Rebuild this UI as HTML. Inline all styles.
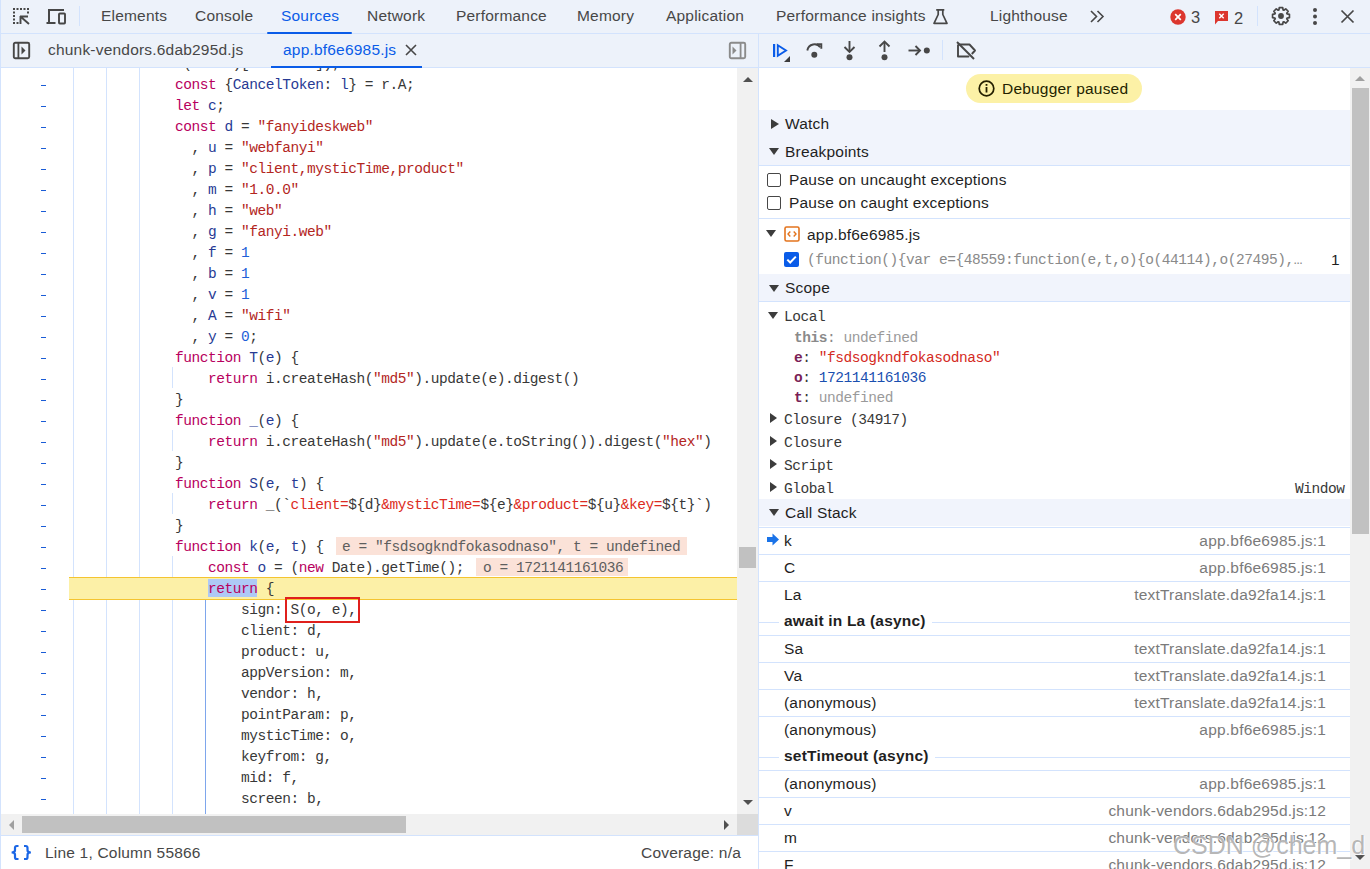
<!DOCTYPE html>
<html><head><meta charset="utf-8"><style>
*{margin:0;padding:0;box-sizing:border-box}
html,body{width:1370px;height:869px;overflow:hidden;background:#fff}
body{position:relative;font-family:"Liberation Sans",sans-serif;color:#1f1f1f}
.a{position:absolute}
.t{position:absolute;white-space:pre;line-height:1;font-size:15.5px;letter-spacing:0.2px}
.bar{position:absolute;background:#edf2fa}
.hl{position:absolute;background:#d3e3fd}
.m{font-family:"Liberation Mono",monospace}
/* code */
.ln{position:absolute;white-space:pre;font-family:"Liberation Mono",monospace;font-size:14.5px;letter-spacing:-0.45px;line-height:21px;height:21px;padding-top:2px;color:#383838}
.dash{position:absolute;left:41px;width:5px;height:1px;margin-top:12px;background:#1a5cd6}
.gd{position:absolute;width:1px;background:#d3e3fd}
.gd.act{background:#7ea6ec}
.kw{color:#b8005e}
.df{color:#273a94}
.st{color:#b3261e}
.nu{color:#1d5fd8}
.tp{color:#dc2b22}
.pl{color:#383838}
.sel{color:#b8005e}
.sc{position:absolute;background:#f1f1f1}
.th{position:absolute;background:#c1c1c1}
.sec{position:absolute;left:759px;width:591px;height:27px;background:#f1f4fc}
.bb{position:absolute;left:759px;width:591px;height:1px;background:#d3e3fd}
.cs{position:absolute;left:759px;width:591px;height:1px;background:#d3e3fd}
.tri{position:absolute;width:0;height:0}
.tr{border-top:5px solid transparent;border-bottom:5px solid transparent;border-left:8px solid #3c3c3c}
.td{border-left:5px solid transparent;border-right:5px solid transparent;border-top:8px solid #3c3c3c}
.fn{color:#6f6f6f}

</style></head><body>
<!-- ===== top toolbar ===== -->
<div class="bar" style="left:0;top:0;width:1370px;height:33px"></div>
<div class="hl" style="left:0;top:33px;width:1370px;height:1px"></div>
<div class="bar" style="left:0;top:34px;width:1370px;height:33px"></div>
<div class="hl" style="left:0;top:67px;width:1370px;height:1px"></div>
<div class="hl" style="left:0;top:0;width:1px;height:869px"></div>
<!-- inspect icon -->
<svg class="a" style="left:12px;top:7px" width="20" height="20" viewBox="0 0 20 20">
 <g fill="#474747"><rect x="1" y="1" width="2" height="2"/><rect x="4.5" y="1" width="2" height="2"/><rect x="8" y="1" width="2" height="2"/><rect x="11.5" y="1" width="2" height="2"/><rect x="15" y="1" width="2" height="2"/>
 <rect x="1" y="4.5" width="2" height="2"/><rect x="1" y="8" width="2" height="2"/><rect x="1" y="11.5" width="2" height="2"/><rect x="1" y="15" width="2" height="2"/><rect x="4.5" y="15" width="2" height="2"/>
 <rect x="15" y="4.5" width="2" height="2"/></g>
 <path d="M8.5 9 L8.5 17 M8 9.5 L16 9.5 M9 10 L17 17" stroke="#474747" stroke-width="1.9" fill="none"/>
</svg>
<!-- device icon -->
<svg class="a" style="left:45px;top:8px" width="24" height="18" viewBox="0 0 24 18">
 <path d="M4 15.5 L4 2 L19 2" stroke="#474747" stroke-width="2" fill="none"/>
 <rect x="1.5" y="14" width="9" height="2" fill="#474747"/>
 <rect x="14" y="5.5" width="6" height="10" rx="0.8" stroke="#474747" stroke-width="1.9" fill="none"/>
</svg>
<div class="hl" style="left:79px;top:6px;width:1px;height:20px"></div>
<div class="t" style="left:101px;top:8px;color:#474747">Elements</div>
<div class="t" style="left:195px;top:8px;color:#474747">Console</div>
<div class="t" style="left:281px;top:8px;color:#0a5ce8">Sources</div>
<div class="a" style="left:267px;top:32px;width:85px;height:2px;background:#0a5ce8;border-radius:1px"></div>
<div class="t" style="left:367px;top:8px;color:#474747">Network</div>
<div class="t" style="left:456px;top:8px;color:#474747">Performance</div>
<div class="t" style="left:577px;top:8px;color:#474747">Memory</div>
<div class="t" style="left:666px;top:8px;color:#474747">Application</div>
<div class="t" style="left:776px;top:8px;color:#474747">Performance insights</div>
<!-- flask -->
<svg class="a" style="left:932px;top:8px" width="17" height="17" viewBox="0 0 17 17">
 <path d="M4.2 1.8 H12.3 M6.2 1.8 V6.5 L2 15.3 H15 L10.8 6.5 V1.8" stroke="#474747" stroke-width="1.7" fill="none" stroke-linejoin="round"/>
</svg>
<div class="t" style="left:990px;top:8px;color:#474747">Lighthouse</div>
<!-- >> -->
<svg class="a" style="left:1088px;top:9px" width="18" height="15" viewBox="0 0 18 15">
 <path d="M3 2 L8.5 7.5 L3 13 M9.5 2 L15 7.5 L9.5 13" stroke="#474747" stroke-width="1.6" fill="none"/>
</svg>
<!-- error badge -->
<svg class="a" style="left:1170px;top:9px" width="16" height="16" viewBox="0 0 16 16">
 <circle cx="8" cy="8" r="7.7" fill="#dc362e"/>
 <path d="M5.2 5.2 L10.8 10.8 M10.8 5.2 L5.2 10.8" stroke="#fff" stroke-width="1.7"/>
</svg>
<div class="t" style="left:1191px;top:9px;color:#474747;font-size:16.5px">3</div>
<svg class="a" style="left:1214px;top:10px" width="15" height="16" viewBox="0 0 15 16">
 <path d="M1 1 H14 V11 H4 L1 14.5 Z" fill="#dc362e"/>
 <path d="M5.3 3.8 L9.7 8.2 M9.7 3.8 L5.3 8.2" stroke="#fff" stroke-width="1.4"/>
</svg>
<div class="t" style="left:1234px;top:10px;color:#474747;font-size:16.5px">2</div>
<div class="hl" style="left:1257px;top:6px;width:1px;height:20px"></div>
<!-- gear -->
<svg class="a" style="left:1270px;top:5px" width="22" height="22" viewBox="0 0 22 22">
 <path d="M17.05 8.93 L19.43 9.29 L19.43 12.71 L17.05 13.07 L16.75 13.81 L18.17 15.75 L15.75 18.17 L13.81 16.75 L13.07 17.05 L12.71 19.43 L9.29 19.43 L8.93 17.05 L8.19 16.75 L6.25 18.17 L3.83 15.75 L5.25 13.81 L4.95 13.07 L2.57 12.71 L2.57 9.29 L4.95 8.93 L5.25 8.19 L3.83 6.25 L6.25 3.83 L8.19 5.25 L8.93 4.95 L9.29 2.57 L12.71 2.57 L13.07 4.95 L13.81 5.25 L15.75 3.83 L18.17 6.25 L16.75 8.19 Z" stroke="#474747" stroke-width="1.7" fill="none" stroke-linejoin="round"/>
 <circle cx="11" cy="11" r="2.9" fill="#474747"/>
</svg>
<!-- kebab -->
<svg class="a" style="left:1312px;top:7px" width="6" height="19" viewBox="0 0 6 19">
 <circle cx="3" cy="3" r="2" fill="#474747"/><circle cx="3" cy="9.5" r="2" fill="#474747"/><circle cx="3" cy="16" r="2" fill="#474747"/>
</svg>
<!-- close -->
<svg class="a" style="left:1340px;top:9px" width="15" height="15" viewBox="0 0 15 15">
 <path d="M1.5 1.5 L13.5 13.5 M13.5 1.5 L1.5 13.5" stroke="#474747" stroke-width="1.7"/>
</svg>

<!-- ===== file tabs row ===== -->
<svg class="a" style="left:12px;top:41px" width="19" height="19" viewBox="0 0 19 19">
 <rect x="1.8" y="1.8" width="15.4" height="15.4" rx="1.5" stroke="#474747" stroke-width="1.9" fill="none"/>
 <rect x="5.5" y="2" width="1.8" height="15" fill="#474747"/>
 <path d="M9.5 5.5 L13.5 9.5 L9.5 13.5 Z" fill="#474747"/>
</svg>
<div class="t" style="left:48px;top:42px;color:#474747">chunk-vendors.6dab295d.js</div>
<div class="t" style="left:283px;top:42px;color:#0a5ce8">app.bf6e6985.js</div>
<svg class="a" style="left:405px;top:44px" width="12" height="12" viewBox="0 0 12 12">
 <path d="M1 1 L11 11 M11 1 L1 11" stroke="#474747" stroke-width="1.6"/>
</svg>
<div class="a" style="left:271px;top:66px;width:151px;height:2px;background:#0a5ce8"></div>
<!-- right sidebar toggle -->
<svg class="a" style="left:728px;top:41px" width="19" height="19" viewBox="0 0 19 19">
 <rect x="1.8" y="1.8" width="15.4" height="15.4" rx="1.5" stroke="#8b8b8b" stroke-width="1.9" fill="none"/>
 <rect x="11.7" y="2" width="1.8" height="15" fill="#8b8b8b"/>
 <path d="M4.5 5.5 L8.5 9.5 L4.5 13.5 Z" fill="#8b8b8b"/>
</svg>
<div class="hl" style="left:758px;top:34px;width:1px;height:835px"></div>

<!-- debugger toolbar -->
<svg class="a" style="left:771px;top:42px" width="21" height="21" viewBox="0 0 21 21">
 <rect x="2" y="2" width="2.2" height="13" fill="#0a5ce8"/>
 <path d="M6.8 3.3 L15 8.5 L6.8 13.7 Z" stroke="#0a5ce8" stroke-width="1.9" fill="none" stroke-linejoin="miter"/>
 <path d="M19 14 L19 20 L13 20 Z" fill="#3c3c3c"/>
</svg>
<svg class="a" style="left:805px;top:41px" width="19" height="19" viewBox="0 0 19 19">
 <path d="M2.3 9.5 C3.5 2.5 12 1.5 15.2 6.2" stroke="#474747" stroke-width="1.9" fill="none"/>
 <path d="M11.8 3.3 H16.3 V7.8" stroke="#474747" stroke-width="1.9" fill="none"/>
 <circle cx="9.3" cy="13.7" r="3" fill="#474747"/>
</svg>
<svg class="a" style="left:841px;top:40px" width="17" height="21" viewBox="0 0 17 21">
 <path d="M8.5 1 L8.5 11" stroke="#474747" stroke-width="1.9"/>
 <path d="M3.5 7 L8.5 12 L13.5 7" stroke="#474747" stroke-width="1.9" fill="none"/>
 <circle cx="8.5" cy="17.2" r="3" fill="#474747"/>
</svg>
<svg class="a" style="left:876px;top:40px" width="17" height="21" viewBox="0 0 17 21">
 <path d="M8.5 2 L8.5 12" stroke="#474747" stroke-width="1.9"/>
 <path d="M3.5 6.5 L8.5 1.5 L13.5 6.5" stroke="#474747" stroke-width="1.9" fill="none"/>
 <circle cx="8.5" cy="17.2" r="3" fill="#474747"/>
</svg>
<svg class="a" style="left:907px;top:41px" width="24" height="19" viewBox="0 0 24 19">
 <path d="M1.5 9.5 L13 9.5" stroke="#474747" stroke-width="1.9"/>
 <path d="M8.5 5 L13 9.5 L8.5 14" stroke="#474747" stroke-width="1.9" fill="none"/>
 <circle cx="19.8" cy="9.5" r="3" fill="#474747"/>
</svg>
<div class="hl" style="left:942px;top:40px;width:1px;height:20px"></div>
<svg class="a" style="left:954px;top:40px" width="24" height="21" viewBox="0 0 24 21">
 <path d="M4 4.5 H15.5 L21 10.5 L17.8 14 M14.5 16.5 H4 Z" stroke="#474747" stroke-width="1.9" fill="none" stroke-linejoin="round"/>
 <path d="M4 4.5 V16.5" stroke="#474747" stroke-width="1.9"/>
 <path d="M3 2 L20 19" stroke="#474747" stroke-width="1.9"/>
</svg>

<!-- ===== editor ===== -->
<div class="a" style="left:0;top:0;width:737px;height:814px;clip-path:inset(68px 0 0 0)">
<div class="gd" style="left:73px;top:68px;height:746px"></div>
<div class="gd" style="left:106px;top:68px;height:746px"></div>
<div class="gd" style="left:139px;top:68px;height:746px"></div>
<div class="gd" style="left:172px;top:367px;height:21px"></div>
<div class="gd" style="left:172px;top:430px;height:21px"></div>
<div class="gd" style="left:172px;top:493px;height:21px"></div>
<div class="gd" style="left:172px;top:556px;height:258px"></div>
<div class="gd act" style="left:205px;top:598px;height:216px"></div>
<div class="a" style="left:69px;top:577px;width:668px;height:23px;background:#fcf0a7;border-top:1px solid #f4c430;border-bottom:1.5px solid #f4c430"></div>
<div class="a" style="left:208px;top:579px;width:49px;height:18px;background:#aec9f6"></div>
<div class="ln" style="top:52px;left:76px">             (     )[        ]);</div>
<div class="dash" style="top:73px"></div>
<div class="ln" style="top:73px;left:76px">            <span class="kw">const</span><span class="pl"> {</span><span class="df">CancelToken</span><span class="pl">: </span><span class="df">l</span><span class="pl">} = r.A;</span></div>
<div class="dash" style="top:94px"></div>
<div class="ln" style="top:94px;left:76px">            <span class="kw">let</span><span class="pl"> </span><span class="df">c</span><span class="pl">;</span></div>
<div class="dash" style="top:115px"></div>
<div class="ln" style="top:115px;left:76px">            <span class="kw">const</span><span class="pl"> </span><span class="df">d</span><span class="pl"> = </span><span class="st">&quot;fanyideskweb&quot;</span></div>
<div class="dash" style="top:136px"></div>
<div class="ln" style="top:136px;left:76px">              <span class="pl">, </span><span class="df">u</span><span class="pl"> = </span><span class="st">&quot;webfanyi&quot;</span></div>
<div class="dash" style="top:157px"></div>
<div class="ln" style="top:157px;left:76px">              <span class="pl">, </span><span class="df">p</span><span class="pl"> = </span><span class="st">&quot;client,mysticTime,product&quot;</span></div>
<div class="dash" style="top:178px"></div>
<div class="ln" style="top:178px;left:76px">              <span class="pl">, </span><span class="df">m</span><span class="pl"> = </span><span class="st">&quot;1.0.0&quot;</span></div>
<div class="dash" style="top:199px"></div>
<div class="ln" style="top:199px;left:76px">              <span class="pl">, </span><span class="df">h</span><span class="pl"> = </span><span class="st">&quot;web&quot;</span></div>
<div class="dash" style="top:220px"></div>
<div class="ln" style="top:220px;left:76px">              <span class="pl">, </span><span class="df">g</span><span class="pl"> = </span><span class="st">&quot;fanyi.web&quot;</span></div>
<div class="dash" style="top:241px"></div>
<div class="ln" style="top:241px;left:76px">              <span class="pl">, </span><span class="df">f</span><span class="pl"> = </span><span class="nu">1</span></div>
<div class="dash" style="top:262px"></div>
<div class="ln" style="top:262px;left:76px">              <span class="pl">, </span><span class="df">b</span><span class="pl"> = </span><span class="nu">1</span></div>
<div class="dash" style="top:283px"></div>
<div class="ln" style="top:283px;left:76px">              <span class="pl">, </span><span class="df">v</span><span class="pl"> = </span><span class="nu">1</span></div>
<div class="dash" style="top:304px"></div>
<div class="ln" style="top:304px;left:76px">              <span class="pl">, </span><span class="df">A</span><span class="pl"> = </span><span class="st">&quot;wifi&quot;</span></div>
<div class="dash" style="top:325px"></div>
<div class="ln" style="top:325px;left:76px">              <span class="pl">, </span><span class="df">y</span><span class="pl"> = </span><span class="nu">0</span><span class="pl">;</span></div>
<div class="dash" style="top:346px"></div>
<div class="ln" style="top:346px;left:76px">            <span class="kw">function</span><span class="pl"> </span><span class="df">T</span><span class="pl">(</span><span class="df">e</span><span class="pl">) {</span></div>
<div class="dash" style="top:367px"></div>
<div class="ln" style="top:367px;left:76px">                <span class="kw">return</span><span class="pl"> i.createHash(</span><span class="st">&quot;md5&quot;</span><span class="pl">).update(e).digest()</span></div>
<div class="dash" style="top:388px"></div>
<div class="ln" style="top:388px;left:76px">            <span class="pl">}</span></div>
<div class="dash" style="top:409px"></div>
<div class="ln" style="top:409px;left:76px">            <span class="kw">function</span><span class="pl"> </span><span class="df">_</span><span class="pl">(</span><span class="df">e</span><span class="pl">) {</span></div>
<div class="dash" style="top:430px"></div>
<div class="ln" style="top:430px;left:76px">                <span class="kw">return</span><span class="pl"> i.createHash(</span><span class="st">&quot;md5&quot;</span><span class="pl">).update(e.toString()).digest(</span><span class="st">&quot;hex&quot;</span><span class="pl">)</span></div>
<div class="dash" style="top:451px"></div>
<div class="ln" style="top:451px;left:76px">            <span class="pl">}</span></div>
<div class="dash" style="top:472px"></div>
<div class="ln" style="top:472px;left:76px">            <span class="kw">function</span><span class="pl"> </span><span class="df">S</span><span class="pl">(</span><span class="df">e</span><span class="pl">, </span><span class="df">t</span><span class="pl">) {</span></div>
<div class="dash" style="top:493px"></div>
<div class="ln" style="top:493px;left:76px">                <span class="kw">return</span><span class="pl"> _(`</span><span class="tp">client=</span><span class="pl">${d}</span><span class="tp">&amp;mysticTime=</span><span class="pl">${e}</span><span class="tp">&amp;product=</span><span class="pl">${u}</span><span class="tp">&amp;key=</span><span class="pl">${t}`)</span></div>
<div class="dash" style="top:514px"></div>
<div class="ln" style="top:514px;left:76px">            <span class="pl">}</span></div>
<div class="dash" style="top:535px"></div>
<div class="ln" style="top:535px;left:76px">            <span class="kw">function</span><span class="pl"> </span><span class="df">k</span><span class="pl">(</span><span class="df">e</span><span class="pl">, </span><span class="df">t</span><span class="pl">) {</span></div>
<div class="dash" style="top:556px"></div>
<div class="ln" style="top:556px;left:76px">                <span class="kw">const</span><span class="pl"> </span><span class="df">o</span><span class="pl"> = (</span><span class="kw">new</span><span class="pl"> Date).getTime();</span></div>
<div class="dash" style="top:577px"></div>
<div class="ln" style="top:577px;left:76px">                <span class="sel">return</span><span class="pl"> {</span></div>
<div class="dash" style="top:598px"></div>
<div class="ln" style="top:598px;left:76px">                    <span class="pl">sign: S(o, e),</span></div>
<div class="dash" style="top:619px"></div>
<div class="ln" style="top:619px;left:76px">                    <span class="pl">client: d,</span></div>
<div class="dash" style="top:640px"></div>
<div class="ln" style="top:640px;left:76px">                    <span class="pl">product: u,</span></div>
<div class="dash" style="top:661px"></div>
<div class="ln" style="top:661px;left:76px">                    <span class="pl">appVersion: m,</span></div>
<div class="dash" style="top:682px"></div>
<div class="ln" style="top:682px;left:76px">                    <span class="pl">vendor: h,</span></div>
<div class="dash" style="top:703px"></div>
<div class="ln" style="top:703px;left:76px">                    <span class="pl">pointParam: p,</span></div>
<div class="dash" style="top:724px"></div>
<div class="ln" style="top:724px;left:76px">                    <span class="pl">mysticTime: o,</span></div>
<div class="dash" style="top:745px"></div>
<div class="ln" style="top:745px;left:76px">                    <span class="pl">keyfrom: g,</span></div>
<div class="dash" style="top:766px"></div>
<div class="ln" style="top:766px;left:76px">                    <span class="pl">mid: f,</span></div>
<div class="dash" style="top:787px"></div>
<div class="ln" style="top:787px;left:76px">                    <span class="pl">screen: b,</span></div>
<!-- inline values -->
<div class="a m" style="left:336px;top:537px;width:351px;height:18px;background:#fbe2d8"></div>
<div class="a m" style="left:476px;top:558px;width:152px;height:18px;background:#fbe2d8"></div>
<div class="ln" style="left:342px;top:535px;color:#5e5e5e">e = "fsdsogkndfokasodnaso", t = undefined</div>
<div class="ln" style="left:483px;top:556px;color:#5e5e5e">o = 1721141161036</div>
<div class="a" style="left:285px;top:597px;width:75px;height:26px;border:2px solid #e0201c"></div>
</div>

<!-- editor scrollbars -->
<div class="sc" style="left:737px;top:68px;width:21px;height:746px"></div>
<div class="tri" style="left:743px;top:77px;border-left:5px solid transparent;border-right:5px solid transparent;border-bottom:5px solid #505050"></div>
<div class="tri" style="left:743px;top:800px;border-left:5px solid transparent;border-right:5px solid transparent;border-top:5px solid #505050"></div>
<div class="th" style="left:739px;top:547px;width:17px;height:21px"></div>
<div class="sc" style="left:1px;top:814px;width:736px;height:21px"></div>
<div class="a" style="left:737px;top:814px;width:21px;height:21px;background:#dcdcdc"></div>
<div class="tri" style="left:9px;top:819.5px;border-top:5px solid transparent;border-bottom:5px solid transparent;border-right:5px solid #a0a0a0"></div>
<div class="tri" style="left:724px;top:820px;border-top:5px solid transparent;border-bottom:5px solid transparent;border-left:5px solid #505050"></div>
<div class="th" style="left:22px;top:816px;width:384px;height:17px"></div>
<div class="hl" style="left:0;top:835px;width:758px;height:1px"></div>
<!-- status bar -->
<svg class="a" style="left:10px;top:844px" width="23" height="17" viewBox="0 0 23 17">
 <path d="M8.5 2 H6.8 Q5 2 5 3.8 V6.3 Q5 8.5 1.6 8.5 Q5 8.5 5 10.7 V13.2 Q5 15 6.8 15 H8.5" stroke="#1a66e6" stroke-width="2.2" fill="none"/>
 <path d="M14 2 H15.7 Q17.5 2 17.5 3.8 V6.3 Q17.5 8.5 20.9 8.5 Q17.5 8.5 17.5 10.7 V13.2 Q17.5 15 15.7 15 H14" stroke="#1a66e6" stroke-width="2.2" fill="none"/>
</svg>
<div class="t" style="left:45px;top:845px;color:#474747">Line 1, Column 55866</div>
<div class="t" style="left:641px;top:845px;color:#474747">Coverage: n/a</div>

<!-- ===== right sidebar ===== -->
<div class="a" style="left:966px;top:74px;width:176px;height:29px;border-radius:14.5px;background:#fcf1a6"></div>
<svg class="a" style="left:978px;top:80px" width="17" height="17" viewBox="0 0 17 17">
 <circle cx="8.5" cy="8.5" r="7.3" stroke="#231f00" stroke-width="1.7" fill="none"/>
 <rect x="7.6" y="7" width="1.8" height="5.5" fill="#231f00"/><rect x="7.6" y="4" width="1.8" height="1.8" fill="#231f00"/>
</svg>
<div class="t" style="left:1002px;top:81px;color:#231f00">Debugger paused</div>

<div class="sec" style="top:110px;height:55px"></div>
<div class="tri tr" style="left:771px;top:119px;border-left-width:8px;border-top-width:5px;border-bottom-width:5px"></div>
<div class="t" style="left:785px;top:116px">Watch</div>
<div class="tri td" style="left:769px;top:148px;border-top-width:7px"></div>
<div class="t" style="left:785px;top:144px">Breakpoints</div>
<div class="bb" style="top:165px"></div>
<div class="a" style="left:767px;top:173px;width:14px;height:14px;border:1.5px solid #474747;border-radius:2px;background:#fff"></div>
<div class="t" style="left:789px;top:172px">Pause on uncaught exceptions</div>
<div class="a" style="left:767px;top:196px;width:14px;height:14px;border:1.5px solid #474747;border-radius:2px;background:#fff"></div>
<div class="t" style="left:789px;top:195px">Pause on caught exceptions</div>
<div class="bb" style="top:218px"></div>
<div class="tri td" style="left:766px;top:230px;border-top-width:7px"></div>
<svg class="a" style="left:784px;top:226px" width="16" height="16" viewBox="0 0 16 16">
 <rect x="1" y="1" width="14" height="14" rx="1.5" stroke="#e3741e" stroke-width="1.6" fill="none"/>
 <path d="M6.3 5.5 L4 8 L6.3 10.5 M9.7 5.5 L12 8 L9.7 10.5" stroke="#e3741e" stroke-width="1.4" fill="none"/>
</svg>
<div class="t" style="left:807px;top:227px">app.bf6e6985.js</div>
<svg class="a" style="left:784px;top:252px" width="15" height="15" viewBox="0 0 15 15">
 <rect x="0" y="0" width="15" height="15" rx="2" fill="#0a5ce8"/>
 <path d="M3.3 7.6 L6.2 10.5 L11.8 4.6" stroke="#fff" stroke-width="2" fill="none"/>
</svg>
<div class="ln" style="left:807px;top:248px;color:#8a8a8a">(function(){var e={48559:function(e,t,o){o(44114),o(27495),…</div>
<div class="t" style="left:1331px;top:252px">1</div>

<div class="sec" style="top:274px"></div>
<div class="tri td" style="left:769px;top:285px;border-top-width:7px"></div>
<div class="t" style="left:785px;top:280px">Scope</div>
<div class="bb" style="top:301px"></div>
<div class="tri td" style="left:768px;top:312px;border-top-width:7px"></div>
<div class="ln" style="left:784px;top:305px">Local</div>
<div class="ln" style="left:794px;top:326px"><b style="color:#8a8a8a">this</b><span style="color:#8a8a8a">: </span><span style="color:#9a9a9a">undefined</span></div>
<div class="ln" style="left:794px;top:346px"><b style="color:#7a1f57">e</b>: <span style="color:#d42a22">"fsdsogkndfokasodnaso"</span></div>
<div class="ln" style="left:794px;top:366px"><b style="color:#7a1f57">o</b>: <span style="color:#1a4fb0">1721141161036</span></div>
<div class="ln" style="left:794px;top:386px"><b style="color:#7a1f57">t</b>: <span style="color:#9a9a9a">undefined</span></div>
<div class="tri tr" style="left:770px;top:413px;border-left-width:7.5px;border-top-width:5.5px;border-bottom-width:5.5px"></div>
<div class="ln" style="left:784px;top:408px">Closure (34917)</div>
<div class="tri tr" style="left:770px;top:436px;border-left-width:7.5px;border-top-width:5.5px;border-bottom-width:5.5px"></div>
<div class="ln" style="left:784px;top:431px">Closure</div>
<div class="tri tr" style="left:770px;top:459px;border-left-width:7.5px;border-top-width:5.5px;border-bottom-width:5.5px"></div>
<div class="ln" style="left:784px;top:454px">Script</div>
<div class="tri tr" style="left:770px;top:482px;border-left-width:7.5px;border-top-width:5.5px;border-bottom-width:5.5px"></div>
<div class="ln" style="left:784px;top:477px">Global</div>
<div class="ln" style="left:1295px;top:477px">Window</div>

<div class="sec" style="top:499px"></div>
<div class="tri td" style="left:769px;top:509px;border-top-width:7px"></div>
<div class="t" style="left:785px;top:505px">Call Stack</div>
<div class="cs" style="top:527px"></div>
<div class="t" style="left:784px;top:533px">k</div>
<div class="t" style="right:44px;top:533px;color:#7a7a7a">app.bf6e6985.js:1</div>
<div class="cs" style="top:554px"></div>
<div class="t" style="left:784px;top:560px">C</div>
<div class="t" style="right:44px;top:560px;color:#7a7a7a">app.bf6e6985.js:1</div>
<div class="cs" style="top:581px"></div>
<div class="t" style="left:784px;top:587px">La</div>
<div class="t" style="right:44px;top:587px;color:#7a7a7a">textTranslate.da92fa14.js:1</div>
<div class="cs" style="top:622px"></div>
<div class="t" style="left:779px;top:613px;font-weight:bold;background:#fff;padding:0 6px 0 5px">await in La (async)</div>
<div class="cs" style="top:635px"></div>
<div class="t" style="left:784px;top:641px">Sa</div>
<div class="t" style="right:44px;top:641px;color:#7a7a7a">textTranslate.da92fa14.js:1</div>
<div class="cs" style="top:662px"></div>
<div class="t" style="left:784px;top:668px">Va</div>
<div class="t" style="right:44px;top:668px;color:#7a7a7a">textTranslate.da92fa14.js:1</div>
<div class="cs" style="top:689px"></div>
<div class="t" style="left:784px;top:695px">(anonymous)</div>
<div class="t" style="right:44px;top:695px;color:#7a7a7a">textTranslate.da92fa14.js:1</div>
<div class="cs" style="top:716px"></div>
<div class="t" style="left:784px;top:722px">(anonymous)</div>
<div class="t" style="right:44px;top:722px;color:#7a7a7a">app.bf6e6985.js:1</div>
<div class="cs" style="top:757px"></div>
<div class="t" style="left:779px;top:748px;font-weight:bold;background:#fff;padding:0 6px 0 5px">setTimeout (async)</div>
<div class="cs" style="top:770px"></div>
<div class="t" style="left:784px;top:776px">(anonymous)</div>
<div class="t" style="right:44px;top:776px;color:#7a7a7a">app.bf6e6985.js:1</div>
<div class="cs" style="top:797px"></div>
<div class="t" style="left:784px;top:803px">v</div>
<div class="t" style="right:44px;top:803px;color:#7a7a7a">chunk-vendors.6dab295d.js:12</div>
<div class="cs" style="top:824px"></div>
<div class="t" style="left:784px;top:830px">m</div>
<div class="t" style="right:44px;top:830px;color:#7a7a7a">chunk-vendors.6dab295d.js:12</div>
<div class="cs" style="top:851px"></div>
<div class="t" style="left:784px;top:857px">F</div>
<div class="t" style="right:44px;top:857px;color:#7a7a7a">chunk-vendors.6dab295d.js:12</div>
<div class="cs" style="top:878px"></div>
<svg class="a" style="left:766px;top:533px" width="14" height="13" viewBox="0 0 14 13"><path d="M1 4 H6.5 V0.5 L13 6.5 L6.5 12.5 V9 H1 Z" fill="#1a73e8"/></svg>

<!-- right scrollbar -->
<div class="sc" style="left:1350px;top:68px;width:20px;height:801px"></div>
<div class="tri" style="left:1355px;top:76px;border-left:5px solid transparent;border-right:5px solid transparent;border-bottom:5px solid #a0a0a0"></div>
<div class="th" style="left:1352px;top:88px;width:17px;height:446px"></div>
<div class="tri" style="left:1355px;top:855px;border-left:5px solid transparent;border-right:5px solid transparent;border-top:5px solid #505050"></div>
<!-- watermark -->
<div class="t" style="left:1173px;top:833px;font-size:25px;color:rgba(120,120,120,0.55);letter-spacing:0;text-shadow:0 0 1px #fff,1px 1px 1px rgba(255,255,255,.8)">CSDN @chem_d</div>

</body></html>
